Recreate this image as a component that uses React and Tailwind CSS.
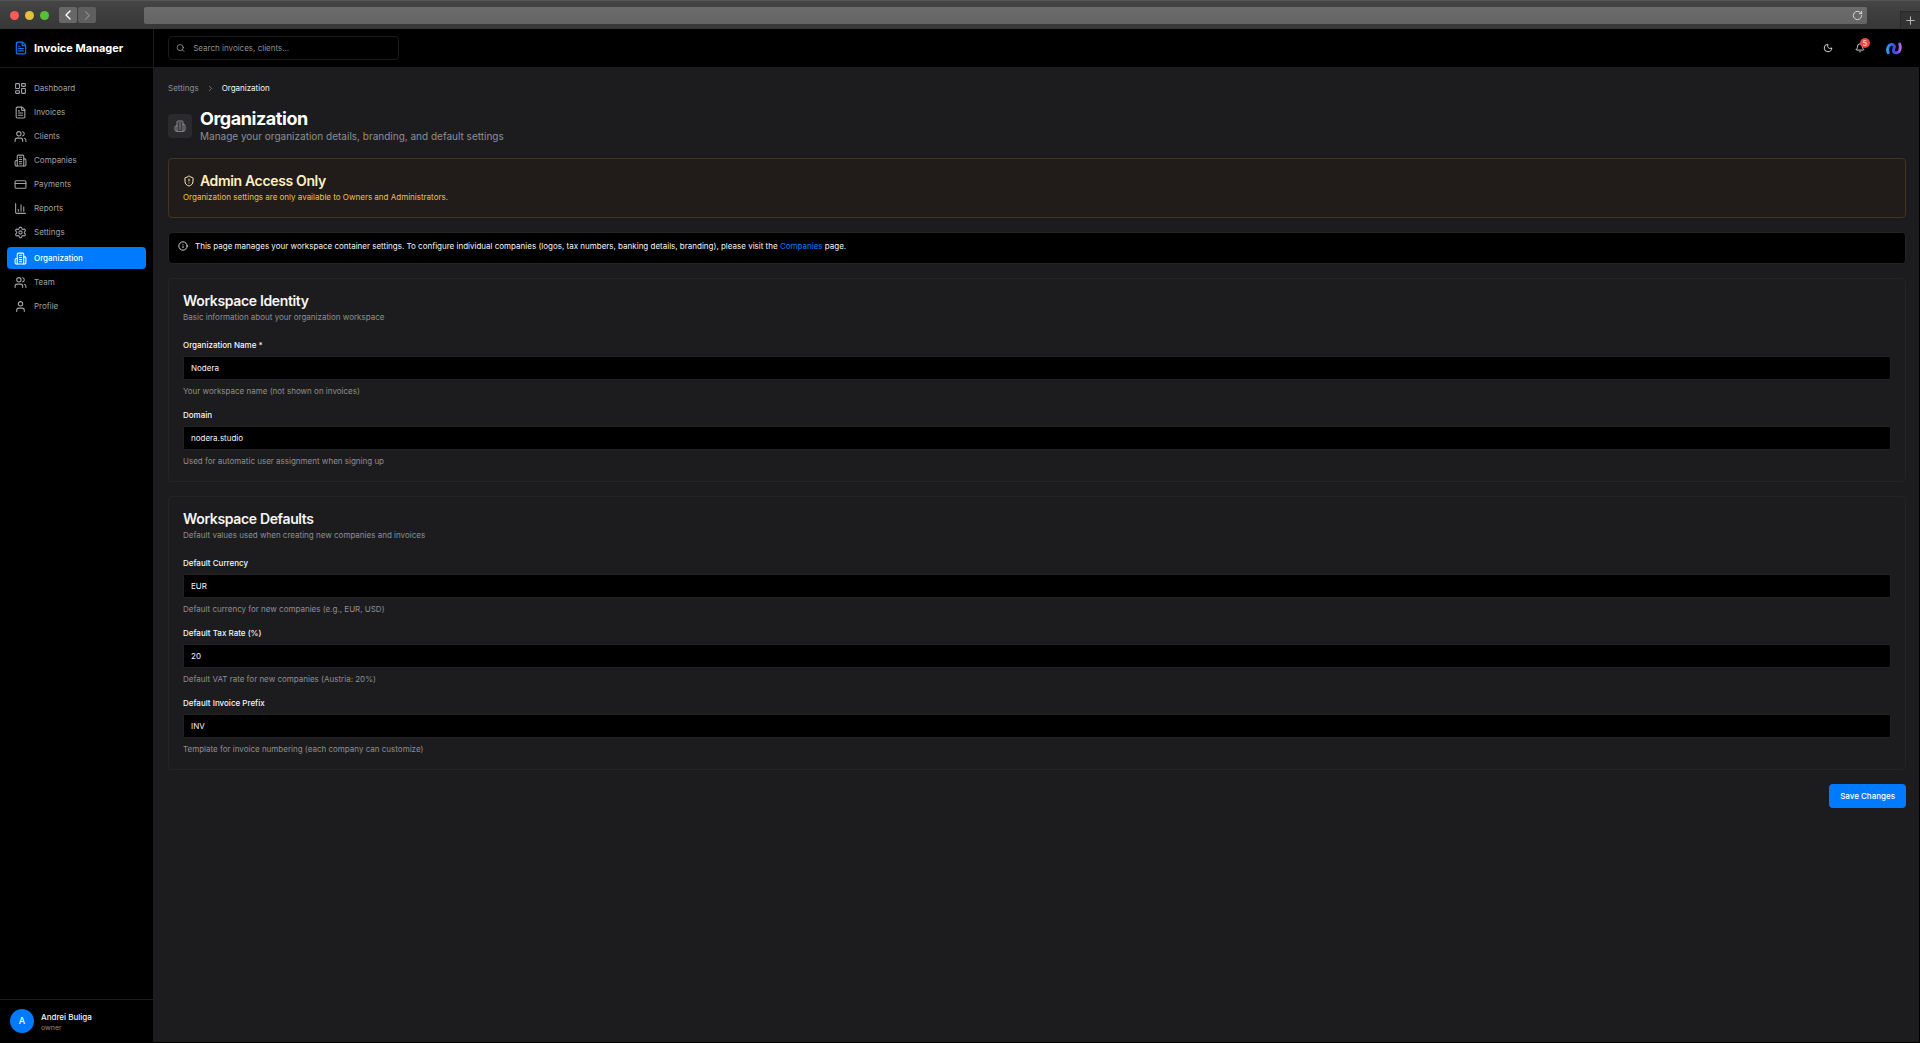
import React, { useState } from 'react';
import {
  Bell,
  ChartColumn,
  ChevronLeft,
  ChevronRight,
  CreditCard,
  FileText,
  Info,
  LayoutDashboard,
  Moon,
  Plus,
  RotateCw,
  Search,
  Settings,
  ShieldAlert,
  User,
  Users,
} from 'lucide-react';

function Building({ size = 12, strokeWidth = 2 }) {
  return (
    <svg
      width={size}
      height={size}
      viewBox="0 0 24 24"
      fill="none"
      stroke="currentColor"
      strokeWidth={strokeWidth}
      strokeLinecap="round"
      strokeLinejoin="round"
    >
      <path d="M6 22V4a2 2 0 0 1 2-2h8a2 2 0 0 1 2 2v18Z" />
      <path d="M6 12H4a2 2 0 0 0-2 2v6a2 2 0 0 0 2 2h2" />
      <path d="M18 9h2a2 2 0 0 1 2 2v9a2 2 0 0 1-2 2h-2" />
      <path d="M10 6h4M10 10h4M10 14h4M10 18h4" />
    </svg>
  );
}

const mainNav = [
  { label: 'Dashboard', icon: LayoutDashboard },
  { label: 'Invoices', icon: FileText },
  { label: 'Clients', icon: Users },
  { label: 'Companies', icon: Building },
  { label: 'Payments', icon: CreditCard },
  { label: 'Reports', icon: ChartColumn },
  { label: 'Settings', icon: Settings },
];

const settingsNav = [
  { label: 'Organization', icon: Building, active: true },
  { label: 'Team', icon: Users },
  { label: 'Profile', icon: User },
];

const identityFields = [
  { id: 'name', label: 'Organization Name *', value: 'Nodera', help: 'Your workspace name (not shown on invoices)' },
  { id: 'domain', label: 'Domain', value: 'nodera.studio', help: 'Used for automatic user assignment when signing up' },
];

const defaultFields = [
  { id: 'currency', label: 'Default Currency', value: 'EUR', help: 'Default currency for new companies (e.g., EUR, USD)' },
  { id: 'tax', label: 'Default Tax Rate (%)', value: '20', help: 'Default VAT rate for new companies (Austria: 20%)' },
  { id: 'prefix', label: 'Default Invoice Prefix', value: 'INV', help: 'Template for invoice numbering (each company can customize)' },
];

function BrowserBar() {
  return (
    <div className="flex h-[29px] shrink-0 items-center border-t border-[#555] bg-linear-to-b from-[#454545] to-[#363636]">
      <div className="flex w-[59px] gap-[6px] pl-[10px]">
        <span className="size-[9px] rounded-full bg-[#fc5b57]" />
        <span className="size-[9px] rounded-full bg-[#e5bf3c]" />
        <span className="size-[9px] rounded-full bg-[#57c038]" />
      </div>
      <div className="flex w-[85px] gap-px">
        <button aria-label="Back" className="flex h-4 w-[18px] items-center justify-center rounded-[2px] bg-[#676767] text-white">
          <ChevronLeft size={16} strokeWidth={2} />
        </button>
        <button aria-label="Forward" className="flex h-4 w-[18px] items-center justify-center rounded-[2px] bg-[#5f5f5f] text-[#858585]">
          <ChevronRight size={15} strokeWidth={2} />
        </button>
      </div>
      <div className="flex h-[17px] flex-1 items-center justify-end rounded-[2px] bg-linear-to-b from-[#6c6c6c] to-[#646464] pr-1">
        <button aria-label="Reload" className="text-[#e0e0e0]">
          <RotateCw size={11} strokeWidth={2} />
        </button>
      </div>
      <button aria-label="New tab" className="ml-[33px] flex h-[18px] w-5 items-center justify-center self-end border-t border-l border-[#2a2a2a] bg-[#333] text-[#b5b5b5]">
        <Plus size={13} strokeWidth={2} />
      </button>
    </div>
  );
}

function NavItem({ item }) {
  const Icon = item.icon;
  return (
    <a
      href="#"
      className={`flex h-[22px] items-center gap-[7px] rounded-[4px] px-[7px] ${item.active ? 'bg-[#007bff] font-medium text-white' : 'text-[#a1a1a6]'}`}
    >
      <Icon size={13} strokeWidth={2} />
      {item.label}
    </a>
  );
}

function Sidebar() {
  return (
    <aside className="flex w-[154px] shrink-0 flex-col border-r border-[#1c1c1e] bg-black">
      <div className="flex h-[39px] items-center gap-[6px] border-b border-[#1c1c1e] pl-[14px]">
        <FileText size={14} strokeWidth={2} className="text-[#007bff]" />
        <span className="text-[11px] font-bold text-white">Invoice Manager</span>
      </div>
      <nav className="flex flex-1 flex-col gap-1 px-[7px] pt-[9px]">
        <div className="flex flex-col gap-[2px]">
          {mainNav.map((item) => (
            <NavItem key={item.label} item={item} />
          ))}
        </div>
        <div className="flex flex-col gap-[2px]">
          {settingsNav.map((item) => (
            <NavItem key={item.label} item={item} />
          ))}
        </div>
      </nav>
      <div className="flex h-[43px] items-center gap-[7px] border-t border-[#1c1c1e] pl-[10px]">
        <span className="flex size-6 items-center justify-center rounded-full bg-[#007bff] text-[9px] font-medium text-white">A</span>
        <div>
          <p className="font-medium text-[#f5f5f7]">Andrei Buliga</p>
          <p className="text-[7px] leading-[9px] text-[#8e8e93]">owner</p>
        </div>
      </div>
    </aside>
  );
}

function Logo() {
  return (
    <svg width="16" height="13" viewBox="0 0 16 13" fill="none">
      <defs>
        <linearGradient id="logo" x1="0" y1="0" x2="16" y2="0" gradientUnits="userSpaceOnUse">
          <stop offset="0" stopColor="#22b5f5" />
          <stop offset="0.45" stopColor="#3a50e0" />
          <stop offset="0.75" stopColor="#7048e8" />
          <stop offset="1" stopColor="#ee7be8" />
        </linearGradient>
      </defs>
      <path
        d="M2.2 10.6C1.4 8.8 1.5 6.4 2.4 4.6C3.6 2 7 1.6 8.2 3.8C9.2 5.8 6.4 8 7.8 9.8C9.2 11.6 12.6 11 13.6 8.4C14.3 6.6 14.3 4 13.6 2"
        stroke="url(#logo)"
        strokeWidth="2.9"
        strokeLinecap="round"
      />
    </svg>
  );
}

function TopBar() {
  return (
    <header className="flex h-[39px] shrink-0 items-center border-b border-[#1c1c1e] bg-black px-[14px]">
      <label className="flex h-6 w-[231px] items-center gap-2 rounded-[4px] border border-[#1c1c1e] px-[7px] text-[#a1a1a6]">
        <Search size={10} strokeWidth={2} />
        <input
          type="search"
          aria-label="Search"
          placeholder="Search invoices, clients..."
          className="w-full bg-transparent outline-none placeholder:text-[#8e8e93]"
        />
      </label>
      <div className="ml-auto flex items-center text-[#f5f5f7]">
        <button aria-label="Toggle theme" className="mr-[22px]">
          <Moon size={10} strokeWidth={2} />
        </button>
        <button aria-label="Notifications" className="relative mr-[21px]">
          <Bell size={10} strokeWidth={2} />
          <span className="absolute -top-[5px] left-[5px] flex size-[10px] items-center justify-center rounded-full bg-[#ef4444] text-[7px] leading-none text-white">
            5
          </span>
        </button>
        <button aria-label="Account" className="mr-[3px]">
          <Logo />
        </button>
      </div>
    </header>
  );
}

function Field({ field }) {
  const [value, setValue] = useState(field.value);
  return (
    <div className="flex flex-col gap-[5px]">
      <label htmlFor={field.id} className="font-medium text-[#f5f5f7]">
        {field.label}
      </label>
      <input
        id={field.id}
        value={value}
        onChange={(e) => setValue(e.target.value)}
        className="h-6 rounded-[2px] border border-[#222224] bg-black px-[7px] text-[#f5f5f7] outline-none"
      />
      <p className="text-[#8e8e93]">{field.help}</p>
    </div>
  );
}

function Card({ title, description, fields }) {
  return (
    <section className="rounded-[4px] border border-[#242426] p-[14px]">
      <h2 className="text-[14px] leading-4 font-semibold tracking-tight text-[#f5f5f7]">{title}</h2>
      <p className="mt-[2px] text-[#8e8e93]">{description}</p>
      <div className="mt-4 flex flex-col gap-3">
        {fields.map((field) => (
          <Field key={field.id} field={field} />
        ))}
      </div>
    </section>
  );
}

export default function App() {
  return (
    <div className="flex min-h-screen flex-col bg-[#1c1c1e] font-['Inter',sans-serif] text-[8px] leading-3">
      <BrowserBar />
      <div className="flex flex-1 border-r border-b border-black">
        <Sidebar />
        <div className="flex min-w-0 flex-1 flex-col">
          <TopBar />
          <main className="flex flex-col pt-[14px] pr-[13px] pl-[14px]">
            {/* Breadcrumb */}
            <nav className="flex items-center gap-[7px] text-[#8e8e93]">
              <a href="#">Settings</a>
              <ChevronRight size={9} strokeWidth={2} />
              <span className="text-[#f5f5f7]">Organization</span>
            </nav>

            {/* Page title */}
            <div className="mt-[15px] flex items-center gap-2">
              <span className="flex size-6 items-center justify-center rounded-[4px] bg-[#2a2a2c] text-[#8e8e93]">
                <Building size={12} />
              </span>
              <div>
                <h1 className="text-[18px] leading-5 font-bold tracking-tight text-white">Organization</h1>
                <p className="text-[10px] leading-[14px] text-[#8e8e93]">Manage your organization details, branding, and default settings</p>
              </div>
            </div>

            {/* Access notice */}
            <section className="mt-[15px] rounded-[4px] border border-[#43331f] bg-[#211c1a] p-[14px]">
              <h2 className="flex items-center gap-[5px] text-[14px] leading-4 font-semibold tracking-tight text-[#fdf0c3]">
                <ShieldAlert size={12} strokeWidth={2} />
                Admin Access Only
              </h2>
              <p className="mt-[2px] text-[#e5c443]">Organization settings are only available to Owners and Administrators.</p>
            </section>

            <div className="mt-[14px] flex h-8 gap-[7px] rounded-[4px] border border-[#242426] bg-black px-[9px] pt-[7px] text-[#f5f5f7]">
              <Info size={10} strokeWidth={2} className="mt-px" />
              <p>
                This page manages your workspace container settings. To configure individual companies (logos, tax numbers, banking details,
                branding), please visit the{' '}
                <a href="#" className="text-[#007bff]">Companies</a> page.
              </p>
            </div>

            <form className="mt-[14px] flex flex-col gap-[14px]" onSubmit={(e) => e.preventDefault()}>
              <Card title="Workspace Identity" description="Basic information about your organization workspace" fields={identityFields} />
              <Card title="Workspace Defaults" description="Default values used when creating new companies and invoices" fields={defaultFields} />
              <button type="submit" className="h-6 self-end rounded-[4px] bg-[#007bff] px-[11px] font-medium text-white">
                Save Changes
              </button>
            </form>
          </main>
        </div>
      </div>
    </div>
  );
}
